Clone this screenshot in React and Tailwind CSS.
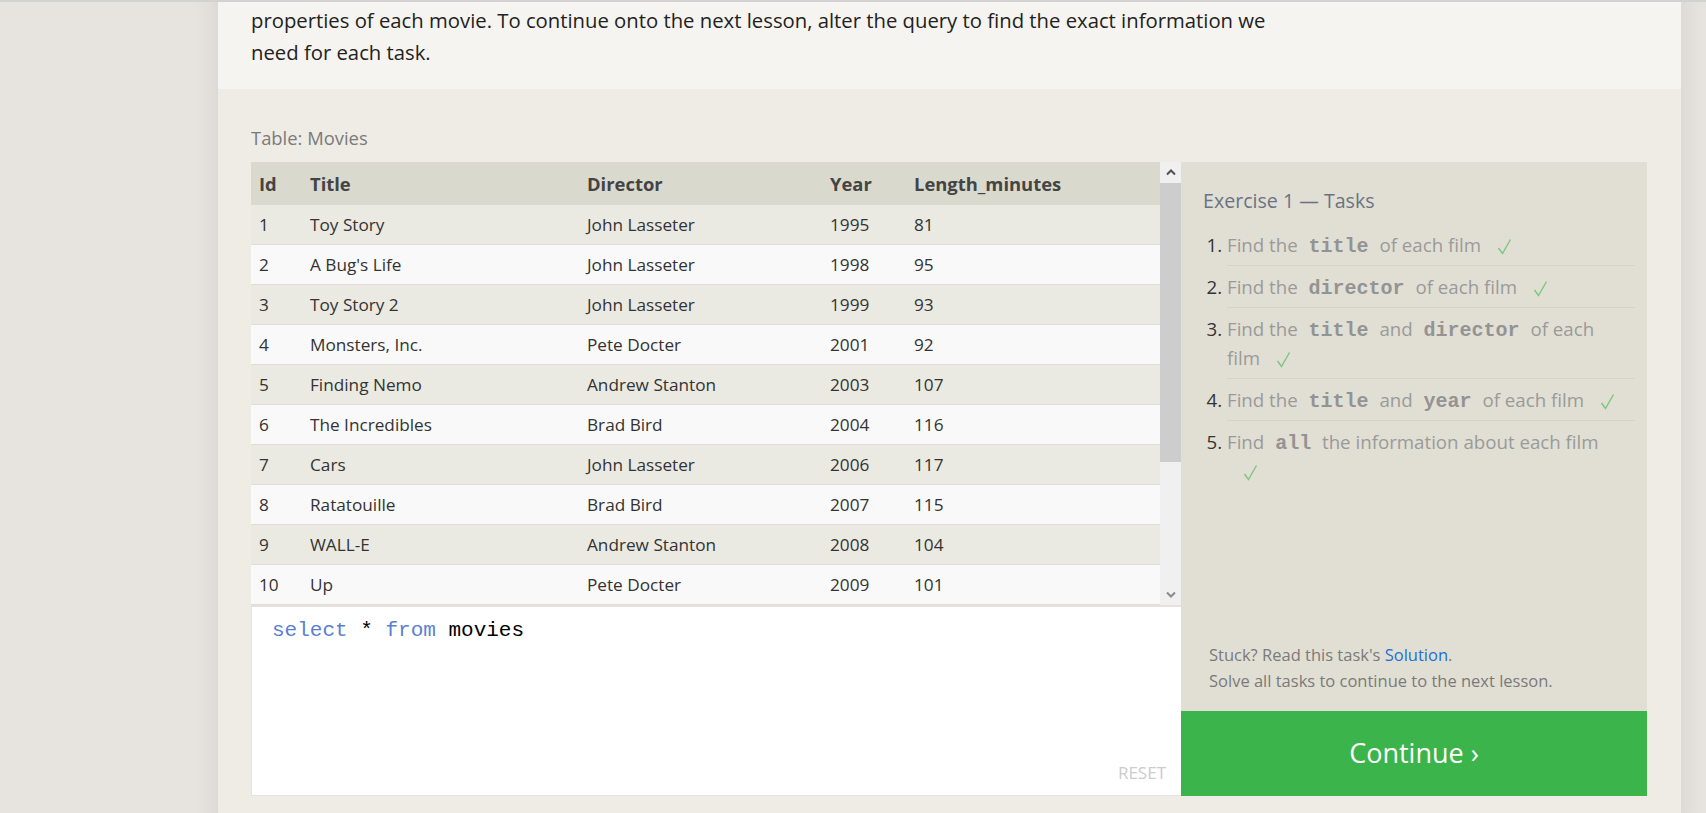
import React from 'react';

const movies = [
  [1, 'Toy Story', 'John Lasseter', 1995, 81],
  [2, "A Bug's Life", 'John Lasseter', 1998, 95],
  [3, 'Toy Story 2', 'John Lasseter', 1999, 93],
  [4, 'Monsters, Inc.', 'Pete Docter', 2001, 92],
  [5, 'Finding Nemo', 'Andrew Stanton', 2003, 107],
  [6, 'The Incredibles', 'Brad Bird', 2004, 116],
  [7, 'Cars', 'John Lasseter', 2006, 117],
  [8, 'Ratatouille', 'Brad Bird', 2007, 115],
  [9, 'WALL-E', 'Andrew Stanton', 2008, 104],
  [10, 'Up', 'Pete Docter', 2009, 101],
];

const Code = ({ children }) => (
  <span className="font-['Liberation_Mono',monospace] font-bold text-[#939393] text-[20px] leading-none px-[6px]">{children}</span>
);

// thin tick like the one in the lesson page
const Check = () => (
  <svg width="15" height="17" viewBox="0 0 15 17" className="inline-block ml-4 align-[-3px]">
    <path d="M1.5 10 L5.5 15.5 L13.5 1.5" fill="none" stroke="#7cc67c" strokeWidth="1.4" />
  </svg>
);

const Task = ({ children, last }) => (
  <li className={`py-[6px] leading-[29px] ${last ? '' : 'border-b border-[#d6d4c8]'}`}>
    <span className="text-[#9a9a9a]">{children}</span>
  </li>
);

export default function App() {
  return (
    <div className="h-[813px] overflow-hidden bg-[#e7e3df] border-t-2 border-[#d2d2d2] font-['Open_Sans',sans-serif]">
      <div className="ml-[218px] w-[1463px] shadow-[0_0_28px_rgba(0,0,0,0.08)]">
        {/* lesson text, scrolled so only its tail shows */}
        <div className="-mt-[30px] bg-[#f5f4f0] pl-[33px] pr-[40px] pb-[21px] text-[20.3px] leading-[32px] text-[#222] whitespace-nowrap">
          This first exercise will only involve the Movies table, and the default query below currently shows all the
          <br />
          properties of each movie. To continue onto the next lesson, alter the query to find the exact information we
          <br />
          need for each task.
        </div>

        <div className="bg-[#efece5] pl-[33px] pr-[34px] pt-[36px] pb-[40px]">
          <div className="text-[18.4px] leading-[26px] text-[#7a7a7a]">Table: Movies</div>

          <div className="mt-[11px] flex">
            <div className="w-[930px] flex flex-col">
              <div className="flex h-[443px]">
                <div className="flex-1 overflow-hidden bg-[#f9f9f9]">
                  <div className="flex h-[43px] items-center bg-[#dad9ce] text-[18.4px] font-bold text-[#444]">
                    <div className="w-[51px] pl-[8px]">Id</div>
                    <div className="w-[277px] pl-[8px]">Title</div>
                    <div className="w-[243px] pl-[8px]">Director</div>
                    <div className="w-[84px] pl-[8px]">Year</div>
                    <div className="flex-1 pl-[8px]">Length_minutes</div>
                  </div>
                  {movies.map((m, i) => (
                    <div
                      key={m[0]}
                      className={`flex h-[40px] items-center border-b border-[#dedede] text-[17.2px] text-[#333] ${
                        i % 2 === 0 ? 'bg-[#eae9e2]' : 'bg-[#f9f9f9]'
                      }`}
                    >
                      <div className="w-[51px] pl-[8px]">{m[0]}</div>
                      <div className="w-[277px] pl-[8px]">{m[1]}</div>
                      <div className="w-[243px] pl-[8px]">{m[2]}</div>
                      <div className="w-[84px] pl-[8px]">{m[3]}</div>
                      <div className="flex-1 pl-[8px]">{m[4]}</div>
                    </div>
                  ))}
                </div>
                {/* scrollbar */}
                <div className="w-[21px] flex flex-col bg-[#f0f0f0]">
                  <div className="h-[21px] flex items-center justify-center">
                    <svg width="10" height="7" viewBox="0 0 10 7">
                      <path d="M1 5.5 L5 1.5 L9 5.5" fill="none" stroke="#505050" strokeWidth="2" />
                    </svg>
                  </div>
                  <div className="h-[279px] bg-[#cdcdcd]" />
                  <div className="flex-1" />
                  <div className="h-[21px] flex items-center justify-center">
                    <svg width="10" height="7" viewBox="0 0 10 7">
                      <path d="M1 1.5 L5 5.5 L9 1.5" fill="none" stroke="#8a8a8a" strokeWidth="2" />
                    </svg>
                  </div>
                </div>
              </div>

              {/* query editor */}
              <div className="h-[191px] flex flex-col bg-white border-t-2 border-[#e4e2da] border-l border-b border-l-[#e6e4de] border-b-[#e6e4de]">
                <div className="pt-[11px] pl-[20px] text-[21px] leading-[26px] font-['Liberation_Mono',monospace] text-black">
                  <span className="text-[#5b80d2]">select</span> * <span className="text-[#5b80d2]">from</span> movies
                </div>
                <div className="mt-auto self-end pr-[15px] pb-[10px] text-[17px] leading-[24px] text-[#cccccc]">RESET</div>
              </div>
            </div>

            {/* tasks panel */}
            <div className="w-[466px] flex flex-col bg-[#e1dfd4]">
              <div className="pl-[22px] pr-[12px] pt-[26px]">
                <div className="text-[19.6px] leading-[26px] text-[#6a7384]">Exercise 1 — Tasks</div>
                <ol className="mt-[10px] pl-[24px] list-decimal list-outside text-[18.7px] marker:text-[#333]">
                  <Task>
                    Find the <Code>title</Code> of each film<Check />
                  </Task>
                  <Task>
                    Find the <Code>director</Code> of each film<Check />
                  </Task>
                  <Task>
                    Find the <Code>title</Code> and <Code>director</Code> of each
                    <br />
                    film<Check />
                  </Task>
                  <Task>
                    Find the <Code>title</Code> and <Code>year</Code> of each film<Check />
                  </Task>
                  <Task last>
                    Find <Code>all</Code> the information about each film
                    <br />
                    <Check />
                  </Task>
                </ol>
              </div>

              <div className="mt-auto pl-[28px] pb-[17px] text-[16.5px] leading-[26px] text-[#7a7a7a]">
                <div>
                  Stuck? Read this task's <span className="text-[#1f6fd6]">Solution</span>.
                </div>
                <div>Solve all tasks to continue to the next lesson.</div>
              </div>

              <div className="h-[85px] flex items-center justify-center bg-[#3ab44b] text-white text-[27px]">
                Continue ›
              </div>
            </div>
          </div>
        </div>
      </div>
    </div>
  );
}
